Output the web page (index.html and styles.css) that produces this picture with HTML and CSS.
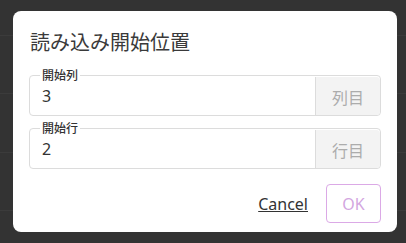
FILE: index.html
```html
<!DOCTYPE html>
<html lang="ja">
  <head>
    <meta charset="UTF-8">
    <meta name="viewport" content="width=device-width, initial-scale=1">
    <title>読み込み開始位置</title>
    <link rel="stylesheet" href="styles.css">
  </head>
  <body>
    <div class="backdrop">
      <div class="dialog" role="dialog" aria-labelledby="dialog-title">
        <h2 id="dialog-title" class="dialog__title">読み込み開始位置</h2>

        <fieldset class="field">
          <legend class="field__label">開始列</legend>
          <div class="field__row">
            <input class="field__input" type="text" value="3">
            <span class="field__unit">列目</span>
          </div>
        </fieldset>

        <fieldset class="field">
          <legend class="field__label">開始行</legend>
          <div class="field__row">
            <input class="field__input" type="text" value="2">
            <span class="field__unit">行目</span>
          </div>
        </fieldset>

        <div class="dialog__actions">
          <button class="btn btn--link" type="button">Cancel</button>
          <button class="btn btn--ok" type="button">OK</button>
        </div>
      </div>
    </div>
  </body>
</html>
```

FILE: styles.css
```css
html,
body {
  margin: 0;
  height: 100%;
}

body {
  background-color: #333333;
  background-image: repeating-linear-gradient(
    to bottom,
    transparent 0,
    transparent 35px,
    #3b3b3b 35px,
    #3b3b3b 36px,
    transparent 36px,
    transparent 58.5px
  );
  font-family: "Noto Sans", "Noto Sans CJK JP", sans-serif;
  color: #333;
}

.backdrop {
  padding: 11px 9px 0 13px;
}

.dialog {
  background: #fff;
  border-radius: 8px;
  padding: 17px 16px 9px 16px;
  height: 195px;
}

.dialog__title {
  margin: 0 0 12px 1px;
  font-family: "Noto Sans CJK JP", sans-serif;
  font-size: 20px;
  font-weight: 400;
  line-height: 28px;
  color: #3a3a3a;
}

.field {
  margin: 0 0 5px 0;
  padding: 0;
  min-width: 0;
  border: 1px solid #dcdcdc;
  border-radius: 4px;
}

.field__label {
  margin-left: 10px;
  padding: 0 2px;
  font-family: "Noto Sans CJK JP", sans-serif;
  font-size: 12px;
  font-weight: 500;
  line-height: 14px;
  color: #333;
}

.field__row {
  display: flex;
  height: 38px;
  margin-top: -5px;
}

.field__input {
  flex: 1;
  min-width: 0;
  border: 0;
  outline: 0;
  padding: 0 12px;
  font-family: "Noto Sans", sans-serif;
  font-size: 16px;
  color: #333;
  background: transparent;
}

.field__unit {
  width: 65px;
  display: flex;
  align-items: center;
  justify-content: center;
  padding-top: 2px;
  box-sizing: border-box;
  border-left: 1px solid #dcdcdc;
  border-radius: 0 4px 4px 0;
  background: #f3f3f3;
  font-family: "Noto Sans CJK JP", sans-serif;
  font-size: 16px;
  color: #acacac;
}

.dialog__actions {
  display: flex;
  justify-content: flex-end;
  align-items: center;
  gap: 18px;
  margin-top: 15px;
}

.btn {
  font-family: "Noto Sans", sans-serif;
  font-size: 16px;
  background: none;
  cursor: pointer;
}

.btn--link {
  border: 0;
  padding: 0;
  color: #333;
  text-decoration: underline;
}

.btn--ok {
  width: 55px;
  height: 39px;
  border: 1px solid #dba9e6;
  border-radius: 4px;
  color: #d3a6df;
}
```
